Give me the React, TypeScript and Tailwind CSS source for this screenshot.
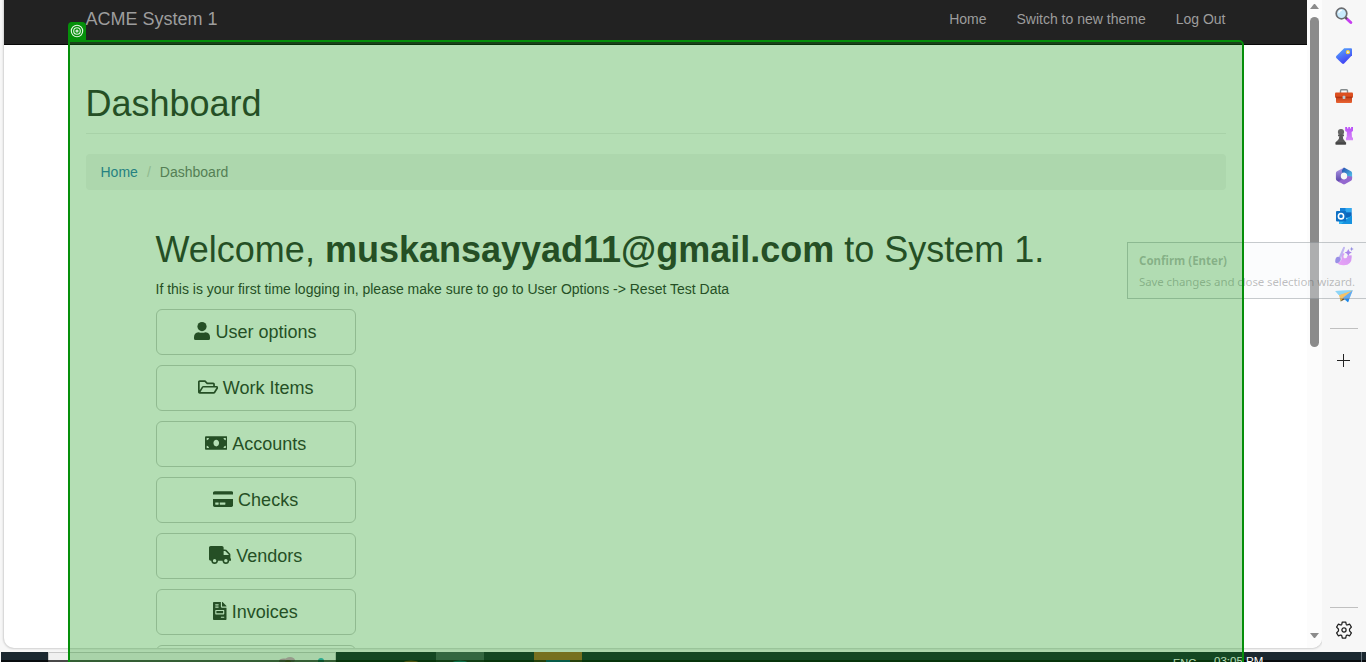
import React from 'react';
import {
  FaRegFolderOpen,
  FaMoneyBill,
  FaCreditCard,
  FaTruck,
  FaFileInvoice,
} from 'react-icons/fa';

const UserIcon = () => (
  <svg className="h-[18px] w-[16px]" viewBox="0 0 16 18" fill="currentColor">
    <circle cx="8" cy="4.600" r="4.600" />
    <path d="M4.500 10.200Q8 11.300 11.500 10.200q4.500.3 4.500 5v1.300q0 1.500-1.500 1.500h-13Q0 18 0 16.500v-1.300q0-4.700 4.500-5z" />
  </svg>
);

const menu = [
  { label: 'User options', icon: <UserIcon /> },
  { label: 'Work Items', icon: <FaRegFolderOpen className="h-[18px] w-[20.25px]" /> },
  { label: 'Accounts', icon: <FaMoneyBill className="h-[18px] w-[22.5px]" /> },
  { label: 'Checks', icon: <FaCreditCard className="h-[18px] w-[20.25px]" /> },
  { label: 'Vendors', icon: <FaTruck className="h-[18px] w-[22.5px]" /> },
  { label: 'Invoices', icon: <FaFileInvoice className="h-[18px] w-[13.5px]" /> },
];

function Navbar() {
  return (
    <nav className="h-[45px] shrink-0 border-b border-[#080808] bg-[#222222] text-[#9d9d9d]">
      <div className="mx-auto flex h-[38px] w-[1140px] items-center justify-between">
        <span className="text-[18px] leading-5">ACME System 1</span>
        <div className="flex gap-[30px] text-[14px] leading-5">
          <a>Home</a>
          <a>Switch to new theme</a>
          <a>Log Out</a>
        </div>
      </div>
    </nav>
  );
}

function Dashboard() {
  return (
    <main className="mx-auto w-[1140px] pt-[39px] text-[#333333]">
      <h1 className="border-b border-[#eeeeee] pb-[9px] text-[36px] leading-[40px]">Dashboard</h1>
      <div className="mt-5 flex h-9 items-center rounded bg-[#f5f5f5] px-[15px] text-[14px] leading-5">
        <a className="text-[#337ab7]">Home</a>
        <span className="w-[22px] text-center text-[#cccccc]">/</span>
        <span className="text-[#777777]">Dashboard</span>
      </div>
      <section className="pl-[70px] pt-10">
        <h2 className="text-[36px] leading-[40px]">
          Welcome, <b>muskansayyad11@gmail.com</b> to System 1.
        </h2>
        <p className="mt-[9px] text-[14px] leading-5">
          If this is your first time logging in, please make sure to go to User Options -&gt; Reset Test Data
        </p>
        <div className="mt-[10px] flex w-[200px] flex-col gap-[10px]">
          {menu.map((m) => (
            <button
              key={m.label}
              className="flex h-[46px] items-center justify-center gap-[5px] rounded-md border border-[#cccccc] text-[18px] leading-6"
            >
              <span className="shrink-0 pb-[2px]">{m.icon}</span>
              <span>{m.label}</span>
            </button>
          ))}
          <button className="h-[46px] rounded-md border border-[#cccccc]" />
        </div>
      </section>
    </main>
  );
}

function Scrollbar() {
  return (
    <div className="flex w-[15px] shrink-0 flex-col items-center justify-between bg-[#fcfcfc]">
      <div className="flex flex-col items-center pt-[4px]">
        <svg className="h-[5px] w-[9px]" viewBox="0 0 9 5">
          <path d="M4 0h1l4 5H0z" fill="#8b8b8b" />
        </svg>
        <div className="mt-[8px] h-[330px] w-[9px] rounded-full bg-[#8b8b8b]" />
      </div>
      <svg className="mb-[10px] h-[5px] w-[9px]" viewBox="0 0 9 5">
        <path d="M0 0h9L5 5H4z" fill="#8b8b8b" />
      </svg>
    </div>
  );
}

const SearchIcon = () => (
  <svg width="18" height="18" viewBox="0 0 18 18">
    <path d="M11.500 11.500l4.300 4" stroke="#c63df0" strokeWidth="3" strokeLinecap="round" />
    <path d="M10 10l2 2" stroke="#555" strokeWidth="2" />
    <circle cx="6.500" cy="6.500" r="5.300" fill="#c8eafc" stroke="#6b6c70" strokeWidth="1.700" />
    <path d="M3.800 6a3 3 0 013-2.600" stroke="#fff" strokeWidth="1.200" fill="none" />
  </svg>
);

const TagIcon = () => (
  <svg width="18" height="18" viewBox="0 0 18 18">
    <defs>
      <linearGradient id="tag" x1="0" y1="0" x2=".5" y2="1">
        <stop stopColor="#58b2fc" />
        <stop offset="1" stopColor="#4140f4" />
      </linearGradient>
    </defs>
    <path d="M9.200 1.200H16q1 0 1 1v6L9.100 16.600q-1 .8-2 0L1.300 11q-.8-1 0-2z" fill="url(#tag)" />
    <circle cx="12.900" cy="5.200" r="1.600" fill="#e9eaff" stroke="#f3ce34" strokeWidth="1.100" />
  </svg>
);

const ToolboxIcon = () => (
  <svg width="18" height="18" viewBox="0 0 18 18">
    <defs>
      <linearGradient id="box" x1="0" y1="0" x2="0" y2="1">
        <stop stopColor="#b93410" />
        <stop offset="1" stopColor="#ea6534" />
      </linearGradient>
    </defs>
    <path d="M5.500 6V3.800q0-1 1-1h5q1 0 1 1V6" fill="none" stroke="#858b8d" strokeWidth="1.400" />
    <path d="M1 9h16v6q0 1-1 1H2q-1 0-1-1z" fill="url(#box)" />
    <path d="M1 5.500h16q1 0 1 1v3q0 .8-1 .8H1q-1 0-1-.8v-3q0-1 1-1z" fill="#dc4f20" />
    <path d="M.3 9.700h17.400v1H.3z" fill="#a92d0e" />
    <rect x="7.600" y="8.800" width="2.800" height="3.200" rx=".8" fill="#b9c7cd" />
  </svg>
);

const ChessIcon = () => (
  <svg width="18" height="18" viewBox="0 0 18 18">
    <defs>
      <linearGradient id="rook" x1="0" y1="0" x2="0" y2="1">
        <stop stopColor="#b94df8" />
        <stop offset="1" stopColor="#d78af7" />
      </linearGradient>
    </defs>
    <path d="M10.200 0h1.900v1.500h1.200V0h1.600v1.500h1.200V0H18v4l-1.400 1 .4 5 1 1v2.300h-7V11l.7-1 .2-5-1.700-1z" fill="url(#rook)" />
    <circle cx="6" cy="5" r="3.100" fill="#656565" />
    <path d="M3 7.600h6v1.600H7.800q0 3 1.600 4.300l1.200 1.500v2.500H.8V15L2.500 13.500q1.800-1.300 1.800-4.300H3z" fill="#595959" />
    <path d="M.5 15.300h10.600v2.200H.5z" fill="#454545" />
  </svg>
);

const M365Icon = () => (
  <svg width="18" height="18" viewBox="0 0 18 18">
    <defs>
      <linearGradient id="loopA" x1="0" y1="0" x2="0" y2="1">
        <stop stopColor="#b59de9" />
        <stop offset="1" stopColor="#5542a6" />
      </linearGradient>
      <linearGradient id="loopB" x1="0" y1="0" x2="1" y2="1">
        <stop stopColor="#234bab" />
        <stop offset="1" stopColor="#54c9ef" />
      </linearGradient>
    </defs>
    <path d="M9 .5L2 4.300Q.9 5 .9 6.200v5.600q0 1.300 1.100 2L5 15.400l3-3.200L5.800 9 8 5.800z" fill="url(#loopA)" />
    <path d="M9 .5L16 4.300q1.100.7 1.100 1.900V11L12.200 9 10 5.800H7.600Q5.500 4 9 .5z" fill="url(#loopB)" />
    <path d="M17.100 9.500v2.300q0 1.300-1.100 2l-5.800 3.300q-1.200.6-2.400 0L2 13.800q3 .6 4.800-1.600H10l2.200-3.200z" fill="#9468cf" />
    <circle cx="9" cy="9" r="3.200" fill="#f7f7f7" />
  </svg>
);

const OutlookIcon = () => (
  <svg width="18" height="18" viewBox="0 0 18 18">
    <path d="M5 1h11.500v10H5z" fill="#1681d8" />
    <path d="M10.500 1h6v4.500h-6z" fill="#32aaf0" />
    <path d="M10.500 5.500h6V10h-6z" fill="#0d65ba" />
    <path d="M4 8.500l6.500 3.700L17 8.500V17H4z" fill="#2fb6f3" />
    <path d="M17 8.500V17H6z" fill="#1592df" />
    <rect x="1" y="4" width="10.200" height="10.500" rx="1" fill="#0d70c5" />
    <ellipse cx="6" cy="9.200" rx="2.600" ry="2.700" fill="none" stroke="#fff" strokeWidth="1.600" />
  </svg>
);

const DesignerIcon = () => (
  <svg width="20" height="20" viewBox="0 0 20 20">
    <defs>
      <linearGradient id="swirl" x1="0" y1="1" x2="1" y2="0">
        <stop stopColor="#e77bf6" />
        <stop offset="1" stopColor="#bd6aed" />
      </linearGradient>
    </defs>
    <path d="M8 7.500q1.800-.8 2.700.3-2.300 2.700-.5 4.400 2.700.8 3.400-2.700l4-.2q1 9.500-7.600 9.900-4.500.3-7-2.200 3.500-.7 4.300-3z" fill="url(#swirl)" />
    <path d="M9.300 1q1.500-.8 1.700.7L7.200 12 4.800 11z" fill="#a894ee" />
    <path d="M1.200 15.500q0-5 3.400-4.700 3 .8 1.900 3.800-1.200 2.700-4 2.600-1.500-.3-1.300-1.700z" fill="#6f5ddd" />
    <path d="M14.300 2.900l1.200 2.500 2.400 1.100-2.400 1.200-1.200 2.400-1.200-2.400-2.400-1.200 2.400-1.100z" fill="#864fe6" />
    <path d="M17.700.8l.6 1.600 1.600.6-1.600.6-.6 1.600-.6-1.600-1.600-.6 1.600-.6z" fill="#5e4fd6" />
  </svg>
);

const DropIcon = () => (
  <svg width="18" height="18" viewBox="0 0 18 18">
    <path d="M.3 4L17.700 3.300 13 15.300 8.700 12 5.700 14.500 4.800 9z" fill="#55b8ed" />
    <path d="M17.700 3.300L4 8l1.700 6.500 2.700-4z" fill="#f5a71f" />
    <path d="M5.700 14.500l2.700-4 1.500 1.800z" fill="#70502c" />
    <path d="M17.700 3.300L8.400 10.500l4.600 4.800z" fill="#1f84ea" />
    <path d="M.3 4l17.400-.7L4 8z" fill="#5cc5f5" />
  </svg>
);

const GearIcon = () => (
  <svg width="18" height="18" viewBox="0 0 18 18" fill="none" stroke="#202020" strokeWidth="1.250" strokeLinejoin="round">
    <path d="M7.300 1h3.400l.5 2.200q.3.900 1.300.7l2.200-.7 1.700 2.900-1.600 1.600q-.8 1.300 0 2.600l1.600 1.600-1.700 2.900-2.200-.7q-1-.2-1.300.7l-.5 2.200H7.300l-.5-2.200q-.3-.9-1.300-.7l-2.200.7-1.700-2.900 1.600-1.600q.8-1.300 0-2.600L1.600 6.100l1.700-2.900 2.200.7q1 .2 1.300-.7z" />
    <circle cx="9" cy="9" r="2.100" />
  </svg>
);

function Sidebar() {
  const apps = [TagIcon, ToolboxIcon, ChessIcon, M365Icon, OutlookIcon, DesignerIcon, DropIcon];
  return (
    <aside className="flex h-[652px] w-[44px] shrink-0 flex-col items-center bg-[#f7f7f7]">
      <div className="flex h-8 items-center"><SearchIcon /></div>
      <div className="mt-1 flex flex-col">
        {apps.map((Icon, i) => (
          <div key={i} className="flex h-10 items-center justify-center"><Icon /></div>
        ))}
      </div>
      <div className="mt-3 h-px w-7 shrink-0 bg-[#c0c0c0]" />
      <svg className="mr-px mt-[25px] h-[13px] w-[13px] shrink-0" viewBox="0 0 13 13">
        <path d="M6.500 0v13M0 6.500h13" stroke="#222" strokeWidth="1" />
      </svg>
      <div className="mt-auto h-px w-7 shrink-0 bg-[#c0c0c0]" />
      <div className="mb-[13px] mt-[13px] h-[18px] shrink-0"><GearIcon /></div>
    </aside>
  );
}

function Taskbar() {
  return (
    <footer className="relative ml-px flex h-[10px] overflow-hidden bg-[#1b2830]">
      <div className="ml-[47px] w-[288px] border border-b-0 border-[#c8c8c8] bg-[#f0f0f0]" />
      <div className="ml-[100px] w-12 bg-[#48555b]" />
      <div className="ml-[50px] w-12 bg-[#a6622a]" />
      <svg className="absolute left-0 top-0 h-[10px] w-[600px]" viewBox="1 0 600 10">
        <ellipse cx="284" cy="9" rx="5" ry="2.500" fill="#cf92ba" />
        <ellipse cx="290" cy="8" rx="5" ry="3" fill="#d6a0c5" />
        <ellipse cx="288" cy="10" rx="3" ry="2" fill="#c87454" />
        <circle cx="321" cy="9" r="3" fill="#3bb3c9" />
      </svg>
      <div className="absolute inset-x-0 bottom-0 h-[2px] bg-black/70" />
      <svg className="absolute left-0 top-0 h-[10px] w-[600px]" viewBox="1 0 600 10">
        <ellipse cx="411" cy="10" rx="7" ry="1.500" fill="#683712" />
        <ellipse cx="460" cy="10" rx="7" ry="1.500" fill="#0d5c61" />
        <path d="M546 8h24v2h-24z" fill="#064465" />
      </svg>
      <span className="absolute left-[1172px] top-[4px] text-[11px] leading-[14px] text-white">ENG</span>
      <span className="absolute left-[1213px] top-[2px] whitespace-nowrap text-[11.500px] leading-[14px] text-white">03:05 PM</span>
      <div className="absolute right-[4px] top-0 h-[10px] w-px bg-[#64717a]" />
    </footer>
  );
}

function ConfirmTooltip() {
  return (
    <div className="absolute left-[1127px] top-[242px] h-[57px] w-[260px] whitespace-nowrap border border-[#646e73]/35 bg-[#f2f5fa]/33 pl-[11px] pt-[10px] font-['Noto_Sans','Open_Sans',sans-serif] text-[11.5px] leading-[15px] text-[#464646]/35">
      <div className="font-bold">Confirm (Enter)</div>
      <div className="mt-[6px] tracking-[-0.1px]">Save changes and close selection wizard.</div>
    </div>
  );
}

function SelectionOverlay() {
  return (
    <>
      <div className="absolute left-[68px] top-[40px] h-[640px] w-[1176px] rounded-tr-[5px] border-2 border-[#058f0a] bg-[#059108]/30 bg-clip-padding" />
      <div className="absolute left-[68px] top-[22px] flex h-[18px] w-[18px] items-center justify-center rounded-t-[4px] bg-[#058f0a]">
        <svg width="14" height="14" viewBox="0 0 14 14" fill="none" stroke="#e4f4e5" strokeWidth="1.100">
          <circle cx="7" cy="7" r="5.700" />
          <circle cx="7" cy="7" r="3.300" />
          <circle cx="7" cy="7" r="1" />
        </svg>
      </div>
    </>
  );
}

export default function App() {
  return (
    <div className="relative h-[662px] w-[1366px] overflow-hidden bg-[#f7f7f7] font-['Liberation_Sans',Arial,sans-serif]">
      <div className="flex h-[652px]">
        <div className="ml-1 flex h-[648px] w-[1318px] shrink-0 overflow-hidden rounded-b-[10px] bg-white shadow-[0_0_2px_1px_rgba(0,0,0,0.16)]">
          <div className="flex w-[1303px] shrink-0 flex-col">
            <Navbar />
            <Dashboard />
          </div>
          <Scrollbar />
        </div>
        <Sidebar />
      </div>
      <Taskbar />
      <ConfirmTooltip />
      <SelectionOverlay />
    </div>
  );
}
